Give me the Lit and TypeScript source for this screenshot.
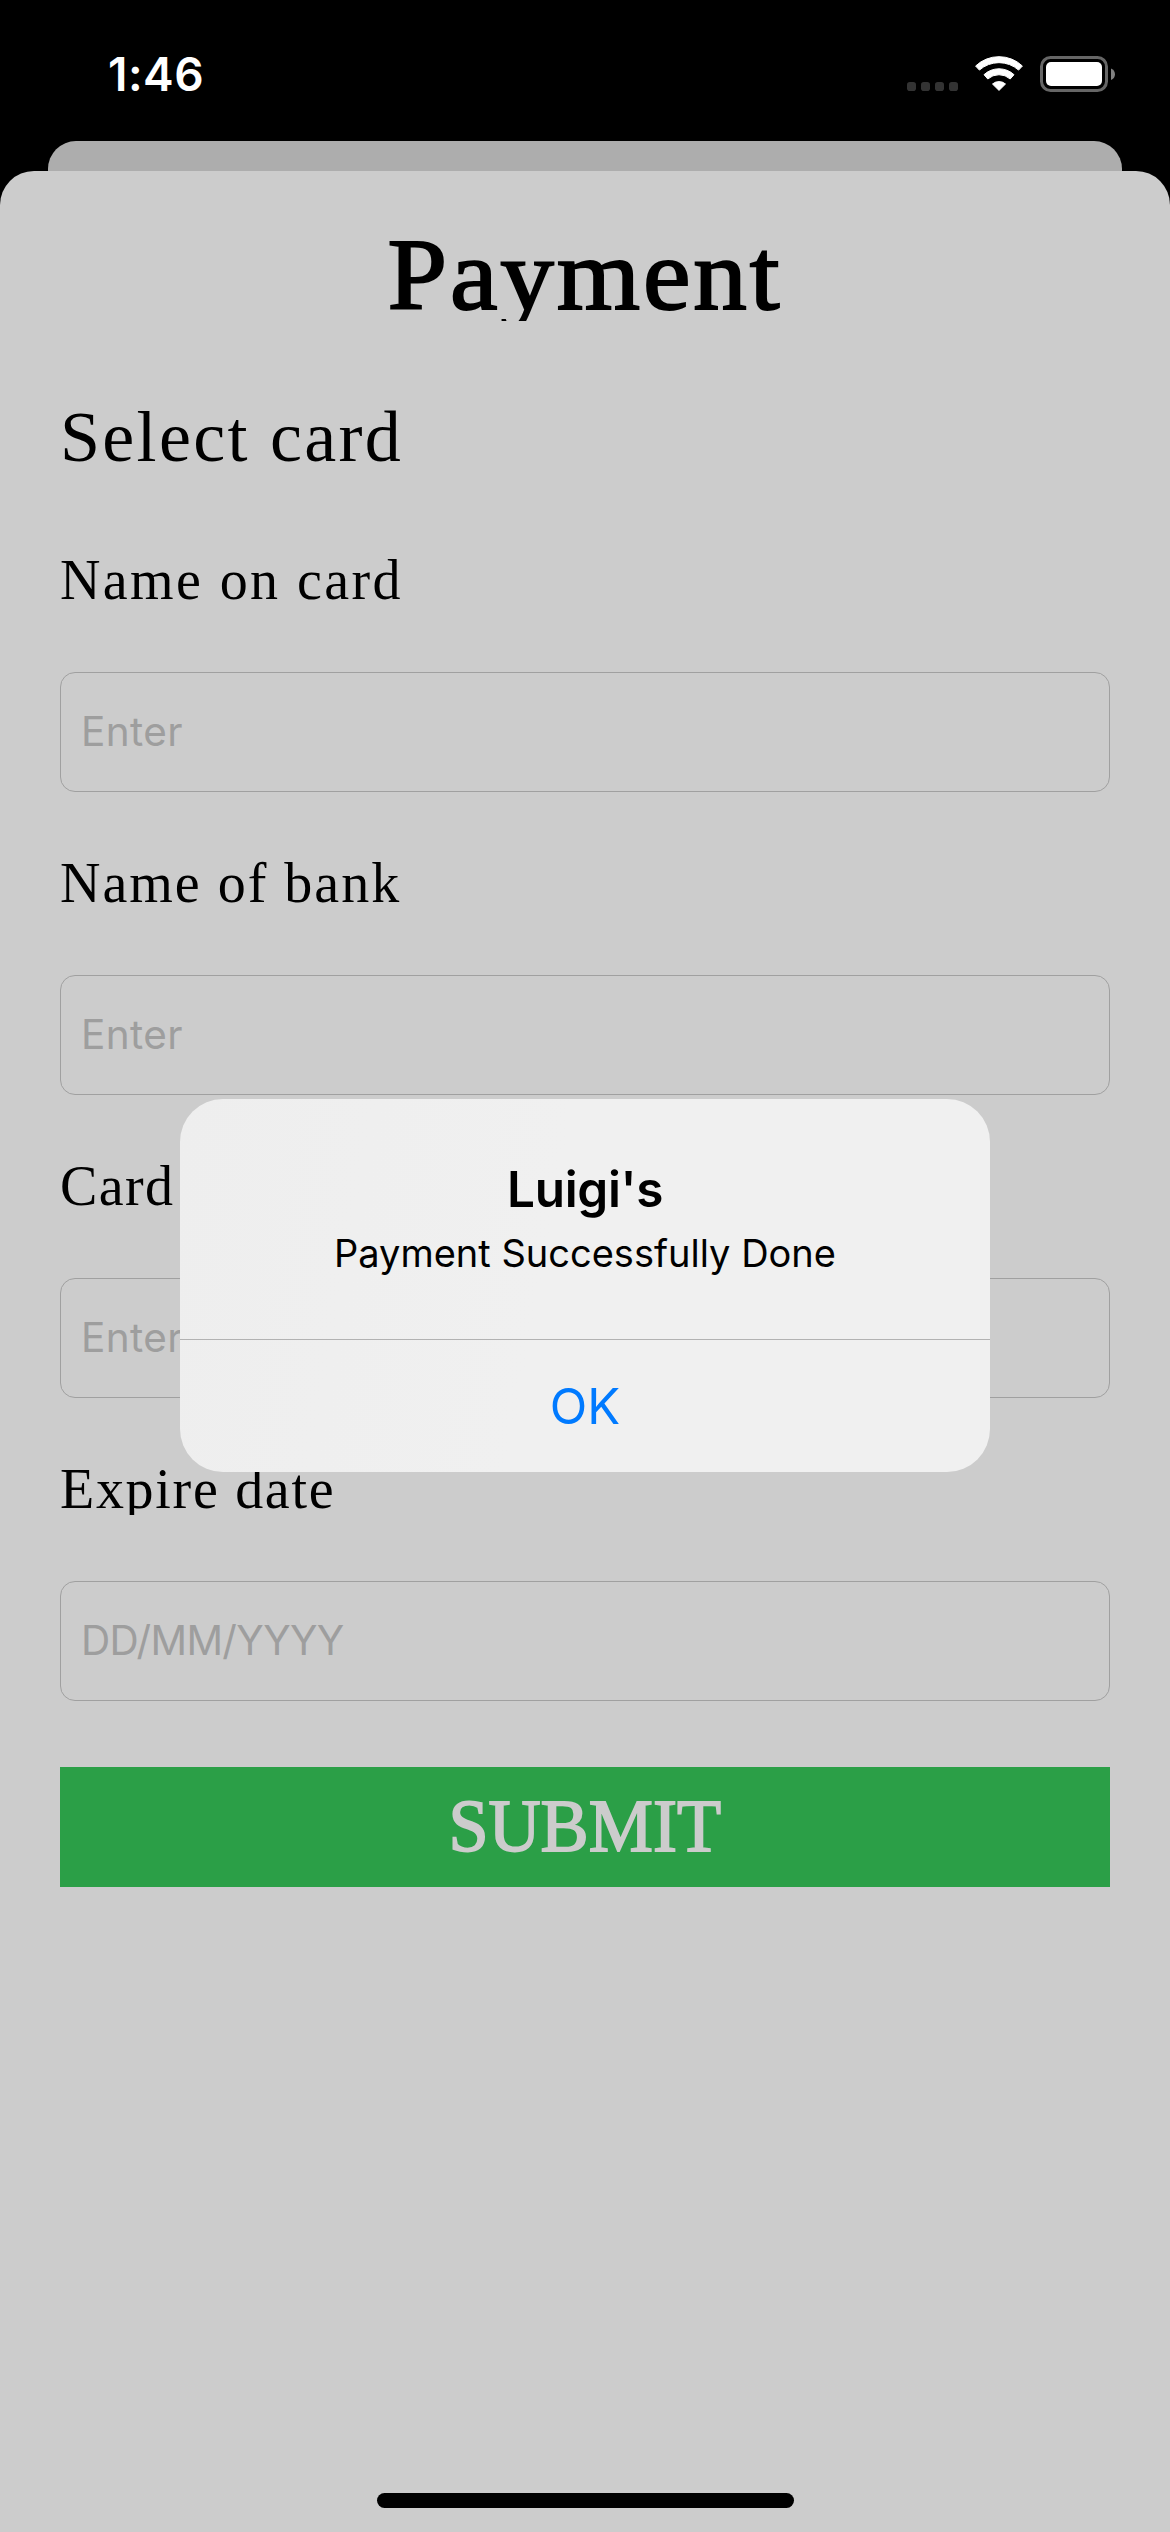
import { LitElement, html, css } from "lit";
import { customElement } from "lit/decorators.js";

interface Field {
  label: string;
  labelTracking: number;
  placeholder: string;
  placeholderTracking: number;
}

const FIELDS: Field[] = [
  { label: "Name on card", labelTracking: 2.4, placeholder: "Enter", placeholderTracking: 0.4 },
  { label: "Name of bank", labelTracking: 2, placeholder: "Enter", placeholderTracking: 0.4 },
  { label: "Card", labelTracking: 1.4, placeholder: "Enter", placeholderTracking: 0.4 },
  { label: "Expire date", labelTracking: 1.7, placeholder: "DD/MM/YYYY", placeholderTracking: -0.65 },
];

@customElement("status-bar")
class StatusBar extends LitElement {
  static styles = css`
    :host {
      display: block;
      height: 141px;
      color: #fff;
    }
    .bar {
      display: flex;
      justify-content: space-between;
      height: 141px;
      padding: 0 55px 0 108px;
    }
    .time {
      padding-top: 44px;
      font: 600 46px/60px Inter, sans-serif;
      letter-spacing: 0.5px;
    }
    .icons {
      display: flex;
      align-items: flex-start;
      padding-top: 50px;
    }
    svg {
      display: block;
    }
  `;

  render() {
    return html`
      <div class="bar">
        <div class="time">1:46</div>
        <div class="icons">
          <svg width="215" height="48" viewBox="900 50 215 48">
            <g fill="#333">
              <rect x="907" y="82" width="9" height="9" rx="2.8" />
              <rect x="921" y="82" width="9" height="9" rx="2.8" />
              <rect x="935" y="82" width="9" height="9" rx="2.8" />
              <rect x="949" y="82" width="9" height="9" rx="2.8" />
            </g>
            <g fill="#fff" stroke="#fff" stroke-width="1" stroke-linejoin="round">
              <path d="M975.6 66A34 34 0 0 1 1022.4 66L1018.6 70.1A29.5 29.5 0 0 0 979.4 70.1Z" />
              <path d="M984 74.7A22 22 0 0 1 1014 74.7L1010.2 79A16.8 16.8 0 0 0 987.8 79Z" />
              <path d="M992.5 84A10 10 0 0 1 1005.5 84L999 90.4Z" />
            </g>
            <rect x="1041.5" y="57.5" width="65" height="33" rx="9" fill="none" stroke="#666" stroke-width="3" />
            <rect x="1046" y="62" width="56" height="24" rx="5" fill="#fff" />
            <path d="M1111 68.5C1116.3 70.3 1116.3 78.2 1111 80Z" fill="#808080" />
          </svg>
        </div>
      </div>
    `;
  }
}

@customElement("card-field")
class CardField extends LitElement {
  static properties = { field: { attribute: false } };
  declare field: Field;

  static styles = css`
    :host {
      display: flex;
      flex-direction: column;
      gap: 66px;
    }
    .label {
      height: 51px;
      overflow: hidden;
      font: 56px/51px "Liberation Serif", serif;
      color: #000;
      white-space: nowrap;
    }
    .box {
      box-sizing: border-box;
      height: 120px;
      padding-left: 20px;
      border: 1px solid #a0a0a0;
      border-radius: 15px;
      font: 40.5px/118px Inter, sans-serif;
      color: #9e9e9e;
    }
  `;

  render() {
    const f = this.field;
    return html`
      <div class="label" style="letter-spacing:${f.labelTracking}px">${f.label}</div>
      <div class="box" style="letter-spacing:${f.placeholderTracking}px">${f.placeholder}</div>
    `;
  }
}

@customElement("alert-dialog")
class AlertDialog extends LitElement {
  static styles = css`
    :host {
      display: flex;
      flex-direction: column;
      box-sizing: border-box;
      width: 810px;
      height: 373px;
      overflow: hidden;
      border-radius: 43px;
      background: linear-gradient(100deg, #eee 0%, #f0f0f0 45%);
      font-family: Inter, sans-serif;
      text-align: center;
      color: #000;
    }
    .message {
      flex: none;
      box-sizing: border-box;
      height: 240px;
      padding-top: 60px;
    }
    .title {
      font-size: 49.5px;
      line-height: 60px;
      font-weight: 600;
      letter-spacing: -0.3px;
    }
    .text {
      margin-top: 6px;
      font-size: 38px;
      line-height: 56px;
    }
    .ok {
      flex: none;
      box-sizing: border-box;
      height: 133px;
      border-top: 1px solid #b2b2b2;
      font-size: 49px;
      line-height: 134px;
      color: #007aff;
    }
  `;

  render() {
    return html`
      <div class="message">
        <div class="title">Luigi's</div>
        <div class="text">Payment Successfully Done</div>
      </div>
      <div class="ok">OK</div>
    `;
  }
}

@customElement("app-root")
class AppRoot extends LitElement {
  static styles = css`
    :host {
      display: block;
    }
    .screen {
      position: relative;
      display: flex;
      flex-direction: column;
      width: 1170px;
      height: 2532px;
      overflow: hidden;
      background: #000;
    }
    .behind {
      flex: none;
      height: 30px;
      margin: 0 48px;
      border-radius: 28px 28px 0 0;
      background: #adadad;
    }
    .sheet {
      flex: 1;
      display: flex;
      flex-direction: column;
      gap: 66px;
      padding: 54px 60px 0;
      border-radius: 34px 34px 0 0;
      background: #ccc;
      font-family: "Liberation Serif", serif;
      color: #000;
    }
    .title {
      display: flex;
      justify-content: center;
      height: 96px;
      overflow: hidden;
      font-size: 102px;
      line-height: 99px;
      letter-spacing: 2.7px;
    }
    .title-text {
      transform: scaleX(1.05);
      -webkit-text-stroke: 2px #000;
    }
    .subtitle {
      height: 102px;
      font-size: 72px;
      line-height: 100px;
      letter-spacing: 2.3px;
    }
    .submit {
      display: flex;
      justify-content: center;
      height: 120px;
      background: #2b9f47;
      color: #ccc;
      font-size: 75px;
      line-height: 117px;
    }
    .submit-text {
      transform: scaleX(0.962);
      -webkit-text-stroke: 1.8px #ccc;
    }
    .alert {
      position: absolute;
      left: 180px;
      top: 1099px;
    }
    .home {
      position: absolute;
      left: 377px;
      top: 2493px;
      width: 417px;
      height: 15px;
      border-radius: 7.5px;
      background: #000;
    }
  `;

  render() {
    return html`
      <div class="screen">
        <status-bar></status-bar>
        <div class="behind"></div>
        <div class="sheet">
          <div class="title"><span class="title-text">Payment</span></div>
          <div class="subtitle">Select card</div>
          ${FIELDS.map((f) => html`<card-field .field=${f}></card-field>`)}
          <div class="submit"><span class="submit-text">SUBMIT</span></div>
        </div>
        <alert-dialog class="alert"></alert-dialog>
        <div class="home"></div>
      </div>
    `;
  }
}
